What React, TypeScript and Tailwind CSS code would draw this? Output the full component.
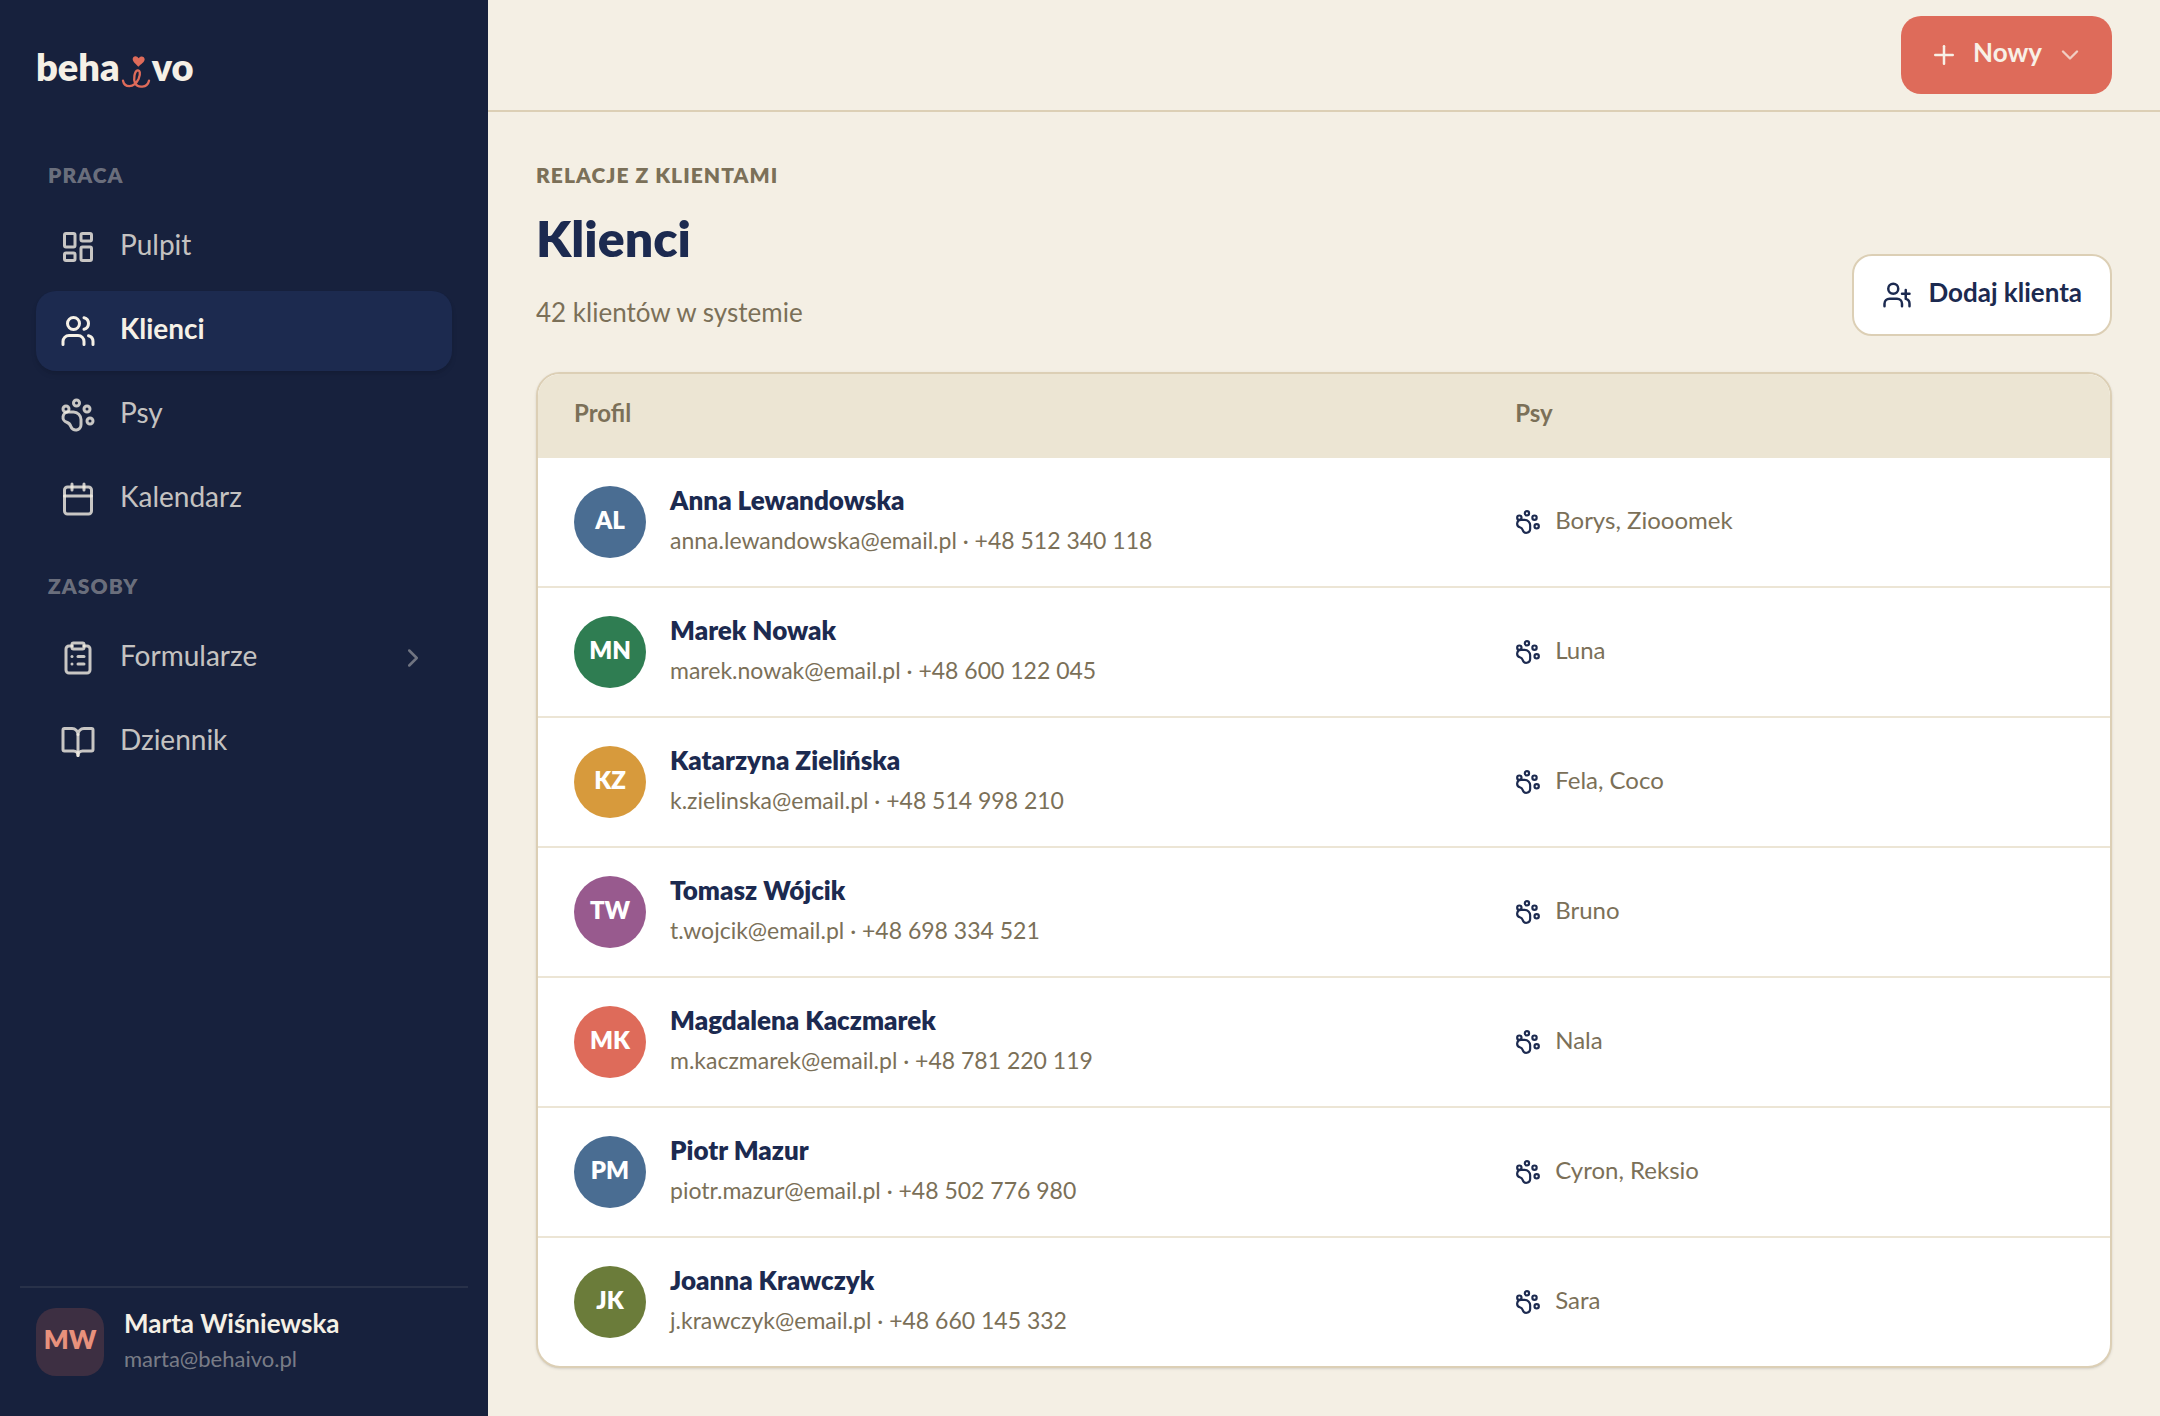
import type { ComponentType, ReactNode } from 'react';
import {
  BookOpen,
  Calendar,
  ChevronDown,
  ChevronRight,
  ClipboardList,
  LayoutDashboard,
  Plus,
  Users,
} from 'lucide-react';

type IconProps = { size?: number };

function StrokeIcon({ size = 24, children }: { size?: number; children: ReactNode }) {
  return (
    <svg
      width={size}
      height={size}
      viewBox="0 0 24 24"
      fill="none"
      stroke="currentColor"
      strokeWidth="2"
      strokeLinecap="round"
      strokeLinejoin="round"
      className="shrink-0"
      aria-hidden="true"
    >
      {children}
    </svg>
  );
}

function Paw({ size }: IconProps) {
  return (
    <StrokeIcon size={size}>
      <circle cx="11" cy="4" r="2" />
      <circle cx="18" cy="8" r="2" />
      <circle cx="20" cy="16" r="2" />
      <circle cx="4" cy="8" r="2" />
      <path d="M9 10a5 5 0 0 1 5 5v3.5a3.5 3.5 0 0 1-6.84 1.045Q6.52 17.48 4.46 16.84A3.5 3.5 0 0 1 5.5 10Z" />
    </StrokeIcon>
  );
}

function AddClient({ size }: IconProps) {
  return (
    <StrokeIcon size={size}>
      <path d="M16 21v-2a4 4 0 0 0-4-4H6a4 4 0 0 0-4 4v2" />
      <circle cx="9" cy="7" r="4" />
      <path d="M22 21v-2a4 4 0 0 0-3-3.87V8" />
      <path d="M22 11h-6" />
    </StrokeIcon>
  );
}

function Logo() {
  return (
    <a
      href="#"
      aria-label="behaivo"
      className="flex items-center text-[38px] leading-[48px] font-extrabold text-[#f5f0e6]"
    >
      <span>beha</span>
      <svg width="30" height="34" viewBox="271 30 90 102" fill="none" className="mx-px mt-3" aria-hidden="true">
        <path
          d="M323 65C316 57 306 51 306 42C306 32 319 30 324 40C329 31 342 33 342 43C342 52 331 57 323 65Z"
          fill="#df6b5a"
        />
        <path
          d="M277 107C281 127 309 132 324 101C331 84 327 75 321 76C311 78 308 103 313 114C321 130 350 129 355 107"
          stroke="#df6b5a"
          strokeWidth="7"
          strokeLinecap="round"
        />
      </svg>
      <span>vo</span>
    </a>
  );
}

type Item = { label: string; icon: ComponentType<IconProps>; active?: boolean; expandable?: boolean };

const sections: { title: string; items: Item[] }[] = [
  {
    title: 'Praca',
    items: [
      { label: 'Pulpit', icon: LayoutDashboard },
      { label: 'Klienci', icon: Users, active: true },
      { label: 'Psy', icon: Paw },
      { label: 'Kalendarz', icon: Calendar },
    ],
  },
  {
    title: 'Zasoby',
    items: [
      { label: 'Formularze', icon: ClipboardList, expandable: true },
      { label: 'Dziennik', icon: BookOpen },
    ],
  },
];

function NavItem({ label, icon: Icon, active, expandable }: Item) {
  return (
    <a
      href="#"
      aria-current={active ? 'page' : undefined}
      className={
        active
          ? 'flex h-20 items-center gap-6 rounded-[20px] bg-[#1c2a4f] px-6 font-bold text-[#f5f0e6] shadow-md'
          : 'flex h-20 items-center gap-6 rounded-[20px] px-6 text-[#f5f0e6]/80'
      }
    >
      <Icon size={36} />
      <span className="flex-1 pb-1.5 text-[28px] leading-9">{label}</span>
      {expandable && (
        <span className="opacity-50">
          <ChevronRight size={30} />
        </span>
      )}
    </a>
  );
}

function Sidebar() {
  return (
    <aside className="flex w-[488px] shrink-0 flex-col bg-[#17213d] pt-[42px] pb-[38px]">
      <div className="px-9">
        <Logo />
      </div>
      <nav className="mt-[70px] flex flex-col gap-8 px-9">
        {sections.map((section) => (
          <section key={section.title}>
            <h2 className="mb-[17px] px-3 text-[21px] leading-[30px] font-extrabold tracking-wider text-[#f5f0e6]/40 uppercase">
              {section.title}
            </h2>
            <div className="flex flex-col gap-1">
              {section.items.map((item) => (
                <NavItem key={item.label} {...item} />
              ))}
            </div>
          </section>
        ))}
      </nav>
      <div className="mx-5 mt-auto flex items-center gap-5 border-t-2 border-[#283149] px-4 pt-[18px]">
        <span className="flex size-17 items-center justify-center rounded-[20px] bg-[#3d2f42] pb-1.5 text-[26px] font-extrabold text-[#e8917c]">
          MW
        </span>
        <div>
          <p className="text-[26px] leading-[34px] font-bold text-[#f5f0e6]">Marta Wiśniewska</p>
          <p className="text-[22px] leading-[38px] text-[#f5f0e6]/45">marta@behaivo.pl</p>
        </div>
      </div>
    </aside>
  );
}

const clients = [
  { initials: 'AL', color: 'bg-[#4a6d92]', name: 'Anna Lewandowska', contact: 'anna.lewandowska@email.pl · +48 512 340 118', dogs: 'Borys, Ziooomek' },
  { initials: 'MN', color: 'bg-[#2f7d52]', name: 'Marek Nowak', contact: 'marek.nowak@email.pl · +48 600 122 045', dogs: 'Luna' },
  { initials: 'KZ', color: 'bg-[#d79a3c]', name: 'Katarzyna Zielińska', contact: 'k.zielinska@email.pl · +48 514 998 210', dogs: 'Fela, Coco' },
  { initials: 'TW', color: 'bg-[#985a8e]', name: 'Tomasz Wójcik', contact: 't.wojcik@email.pl · +48 698 334 521', dogs: 'Bruno' },
  { initials: 'MK', color: 'bg-[#de6b5a]', name: 'Magdalena Kaczmarek', contact: 'm.kaczmarek@email.pl · +48 781 220 119', dogs: 'Nala' },
  { initials: 'PM', color: 'bg-[#4a6d92]', name: 'Piotr Mazur', contact: 'piotr.mazur@email.pl · +48 502 776 980', dogs: 'Cyron, Reksio' },
  { initials: 'JK', color: 'bg-[#6b7c3a]', name: 'Joanna Krawczyk', contact: 'j.krawczyk@email.pl · +48 660 145 332', dogs: 'Sara' },
];

function ClientTable() {
  return (
    <div className="mt-9 overflow-hidden rounded-3xl border-2 border-[#dccfb5] bg-white shadow-sm">
      <table className="w-full table-fixed text-left">
        <thead className="bg-[#ece5d3] text-2xl font-bold text-[#7b7058]">
          <tr className="h-[84px]">
            <th scope="col" className="w-3/5 px-9 pb-1.5">
              Profil
            </th>
            <th scope="col" className="px-[34px] pb-1.5">
              Psy
            </th>
          </tr>
        </thead>
        <tbody className="divide-y-2 divide-[#ece5d5]">
          {clients.map((client) => (
            <tr key={client.name}>
              <td className="px-9 py-6">
                <div className="flex items-center gap-6">
                  <span
                    className={`flex size-18 shrink-0 items-center justify-center rounded-full pb-1 text-2xl font-extrabold text-white ${client.color}`}
                  >
                    {client.initials}
                  </span>
                  <div className="pb-1">
                    <p className="text-[26px] leading-9 font-extrabold text-[#1c2a50]">{client.name}</p>
                    <p className="mt-1 text-[23px] leading-9 text-[#7b7058]">{client.contact}</p>
                  </div>
                </div>
              </td>
              <td className="px-[34px]">
                <div className="flex items-center gap-3.5 text-[#1c2a50]">
                  <Paw size={26} />
                  <span className="pb-1 text-2xl text-[#7b7058]">{client.dogs}</span>
                </div>
              </td>
            </tr>
          ))}
        </tbody>
      </table>
    </div>
  );
}

export default function App() {
  return (
    <div className="flex min-h-screen bg-[#f4efe4] font-['Lato',sans-serif]">
      <Sidebar />
      <div className="flex-1">
        <header className="flex h-28 items-center justify-end border-b-2 border-[#dccfb5] px-12">
          <button
            type="button"
            className="flex h-[78px] items-center gap-3.5 rounded-[20px] bg-[#de6b5a] px-7 text-[26px] font-bold text-[#f8f0e6]"
          >
            <Plus size={30} />
            <span className="pb-1.5">Nowy</span>
            <ChevronDown size={28} className="opacity-75" />
          </button>
        </header>
        <main className="px-12 pt-12 pb-12">
          <div className="flex items-end justify-between">
            <div>
              <p className="text-[21px] leading-[30px] font-extrabold tracking-wider text-[#7b7058] uppercase">
                Relacje z klientami
              </p>
              <h1 className="mt-[18px] text-[50px] leading-[60px] font-extrabold text-[#1c2a50]">Klienci</h1>
              <p className="mt-[26px] pb-1.5 text-[26px] leading-9 text-[#7b7058]">42 klientów w systemie</p>
            </div>
            <button
              type="button"
              className="flex h-[82px] items-center gap-4 rounded-[20px] border-2 border-[#dccfb5] bg-white px-7 text-[26px] font-bold text-[#1c2a50]"
            >
              <AddClient size={30} />
              <span className="pb-1.5">Dodaj klienta</span>
            </button>
          </div>
          <ClientTable />
        </main>
      </div>
    </div>
  );
}
